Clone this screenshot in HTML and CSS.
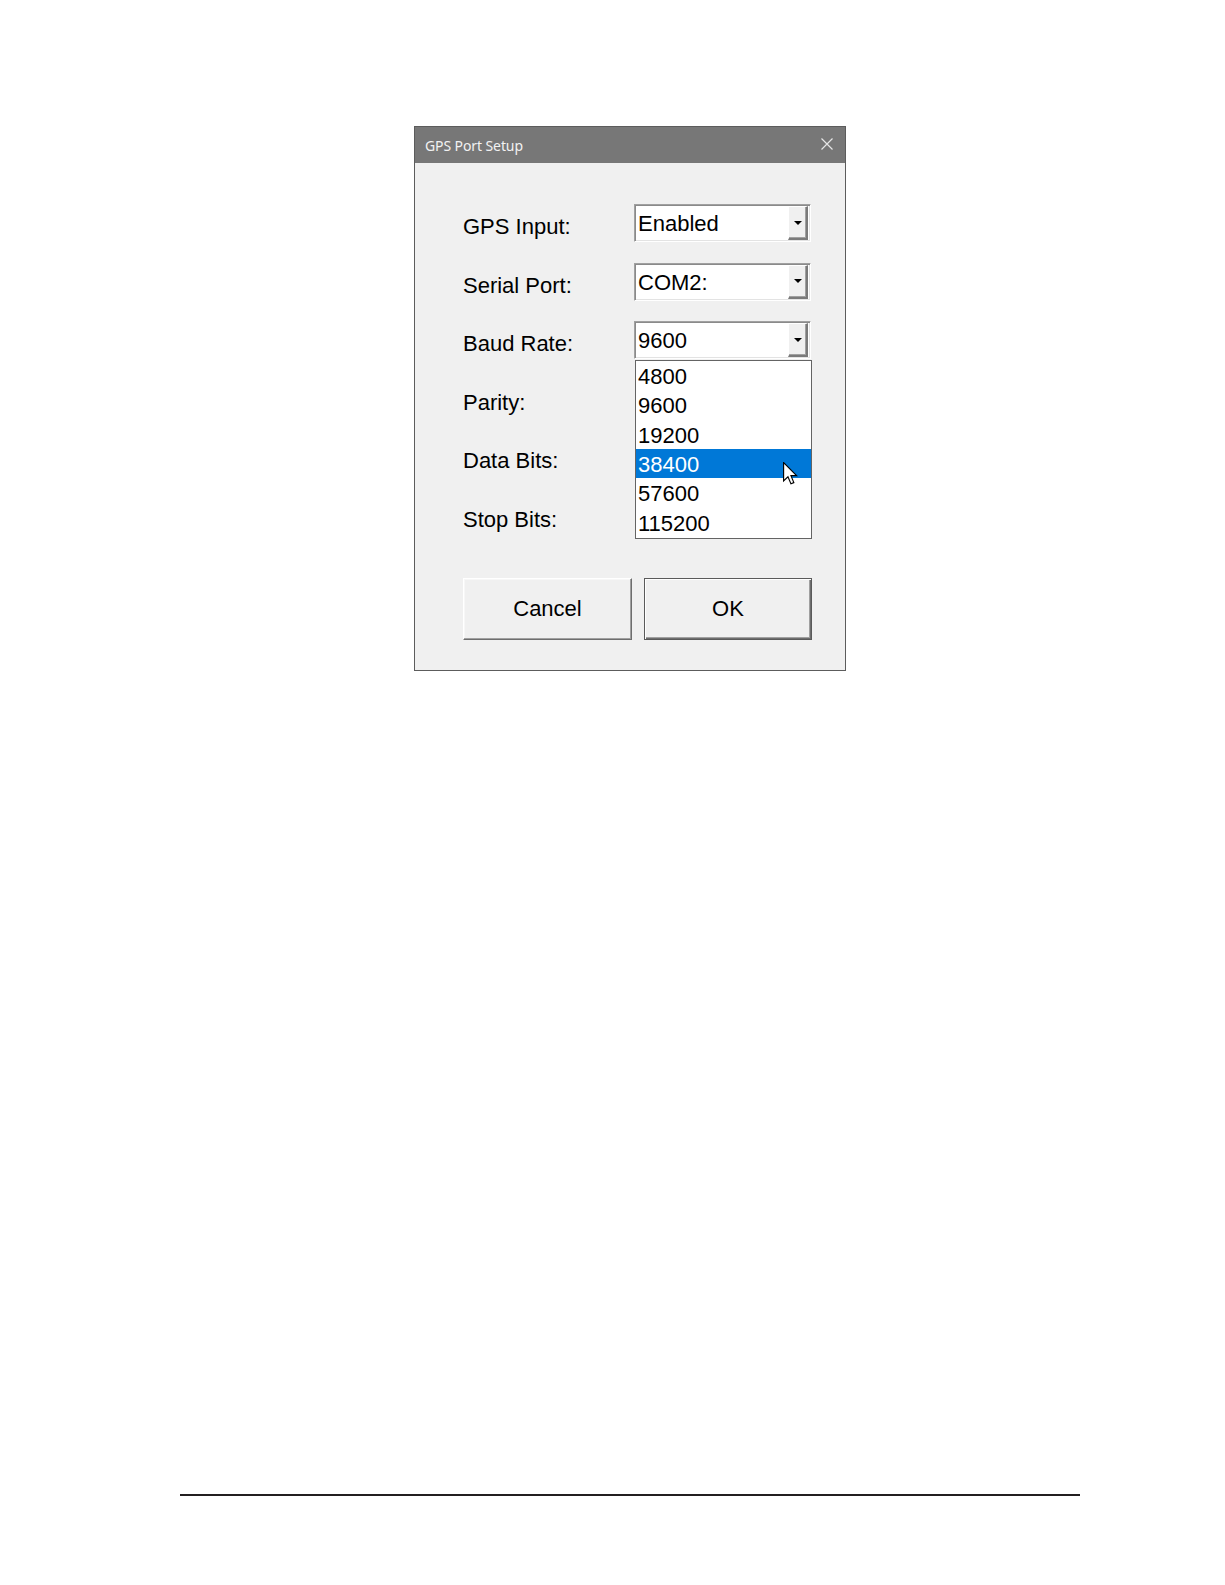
FILE: index.html
```html
<!DOCTYPE html>
<html>
<head>
<meta charset="utf-8">
<title>GPS Port Setup</title>
<link rel="stylesheet" href="styles.css">
</head>
<body>
<div class="page">
  <div class="dialog">
    <div class="titlebar">
      <span class="title">GPS Port Setup</span>
      <svg class="close" width="12" height="12" viewBox="0 0 12 12"><path d="M0.5 0.5 L11.5 11.5 M11.5 0.5 L0.5 11.5" stroke="#e6e6e6" stroke-width="1.2" fill="none"/></svg>
    </div>
    <div class="content">
      <div class="form">
        <div class="label">GPS Input:</div>
        <div class="cell">
          <div class="combo"><span class="value">Enabled</span><span class="drop"><i class="arrow"></i></span></div>
        </div>
        <div class="label">Serial Port:</div>
        <div class="cell">
          <div class="combo"><span class="value">COM2:</span><span class="drop"><i class="arrow"></i></span></div>
        </div>
        <div class="label">Baud Rate:</div>
        <div class="cell">
          <div class="combo"><span class="value">9600</span><span class="drop"><i class="arrow"></i></span></div>
          <ul class="list">
            <li>4800</li>
            <li>9600</li>
            <li>19200</li>
            <li class="sel">38400</li>
            <li>57600</li>
            <li>115200</li>
            <svg class="cursor" width="15" height="23" viewBox="0 0 13 20"><path d="M0.5 0.5 L0.5 16.5 L4.3 12.8 L6.9 19 L9.4 17.9 L6.9 11.9 L11.8 11.9 Z" fill="#fff" stroke="#000" stroke-width="1" stroke-linejoin="miter"/></svg>
          </ul>
        </div>
        <div class="label">Parity:</div>
        <div class="cell"></div>
        <div class="label">Data Bits:</div>
        <div class="cell"></div>
        <div class="label">Stop Bits:</div>
        <div class="cell"></div>
      </div>
      <div class="buttons">
        <button class="btn cancel">Cancel</button>
        <button class="btn ok">OK</button>
      </div>
    </div>
  </div>
  <div class="footer-line"></div>
</div>
</body>
</html>
```

FILE: styles.css
```css
html, body {
  margin: 0;
  padding: 0;
  background: #ffffff;
}

.page {
  padding-top: 126px;
  padding-left: 414px;
  height: 1585px;
  box-sizing: border-box;
}

.dialog {
  box-sizing: border-box;
  width: 432px;
  border: 1px solid #5c5c5c;
  background: #f0f0f0;
  font-family: "Liberation Sans", Arial, sans-serif;
  color: #000;
}

.titlebar {
  height: 36px;
  background: #777777;
  display: flex;
  align-items: center;
  justify-content: space-between;
  padding: 0 12px 0 10px;
}

.title {
  font-family: "Noto Sans", "Open Sans", sans-serif;
  font-size: 14px;
  color: #f2f2f2;
  letter-spacing: -0.1px;
  margin-top: 1px;
}

.close {
  display: block;
  margin-top: -2px;
}

.content {
  padding: 41px 0 30px 48px;
}

.form {
  display: grid;
  grid-template-columns: 171px 177px;
  grid-auto-rows: 38px;
  row-gap: 20.5px;
}

.label {
  font-size: 22px;
  line-height: 38px;
  padding-top: 4px;
  white-space: nowrap;
}

.cell {
  position: relative;
}

.combo {
  box-sizing: border-box;
  width: 177px;
  height: 38px;
  background: #fff;
  border: 1px solid;
  border-color: #a0a0a0 #ffffff #ffffff #a0a0a0;
  box-shadow: inset 1px 1px 0 #8a8a8a, inset -1px -1px 0 #e3e3e3;
  padding: 1px 2px 2px 1px;
  display: flex;
}

.value {
  flex: 1;
  font-size: 22px;
  line-height: 34px;
  padding: 1px 0 0 2px;
  white-space: nowrap;
}

.drop {
  box-sizing: border-box;
  width: 20px;
  height: 34px;
  background: #f0f0f0;
  border-style: solid;
  border-width: 1px 2px 2px 1px;
  border-color: #ffffff #7a7a7a #7a7a7a #ffffff;
  box-shadow: inset -1px -1px 0 #a0a0a0;
  display: flex;
  align-items: center;
  justify-content: center;
}

.arrow {
  display: block;
  width: 0;
  height: 0;
  border-left: 4px solid transparent;
  border-right: 4px solid transparent;
  border-top: 4px solid #000;
  margin-left: 1px;
}

.list {
  position: absolute;
  left: 1px;
  top: 39px;
  width: 177px;
  box-sizing: border-box;
  margin: 0;
  padding: 0 0 1px 0;
  list-style: none;
  background: #fff;
  border: 1px solid #646464;
  z-index: 2;
}

.list li {
  font-size: 22px;
  height: 29.33px;
  line-height: 31px;
  padding-left: 2px;
  overflow: hidden;
}

.list li.sel {
  background: #0078d7;
  color: #ffffff;
}

.cursor {
  position: absolute;
  left: 147px;
  top: 101px;
}

.buttons {
  display: flex;
  gap: 12px;
  margin-top: 43.5px;
}

.btn {
  box-sizing: border-box;
  height: 62px;
  background: #f0f0f0;
  font-family: "Liberation Sans", Arial, sans-serif;
  font-size: 22px;
  color: #000;
  padding: 0;
  margin: 0;
  cursor: default;
}

.cancel {
  width: 169px;
  border: 1px solid;
  border-color: #ffffff #6e6e6e #6e6e6e #ffffff;
  box-shadow: inset -1px -1px 0 #a0a0a0, inset 1px 1px 0 #f7f7f7;
}

.ok {
  width: 168px;
  border: 1px solid #5a5a5a;
  box-shadow: inset 1px 1px 0 #ffffff, inset -1px -1px 0 #6e6e6e, inset -2px -2px 0 #a0a0a0;
}

.footer-line {
  width: 900px;
  height: 2px;
  background: #231f20;
  margin-top: 823px;
  margin-left: -234px;
}
```
